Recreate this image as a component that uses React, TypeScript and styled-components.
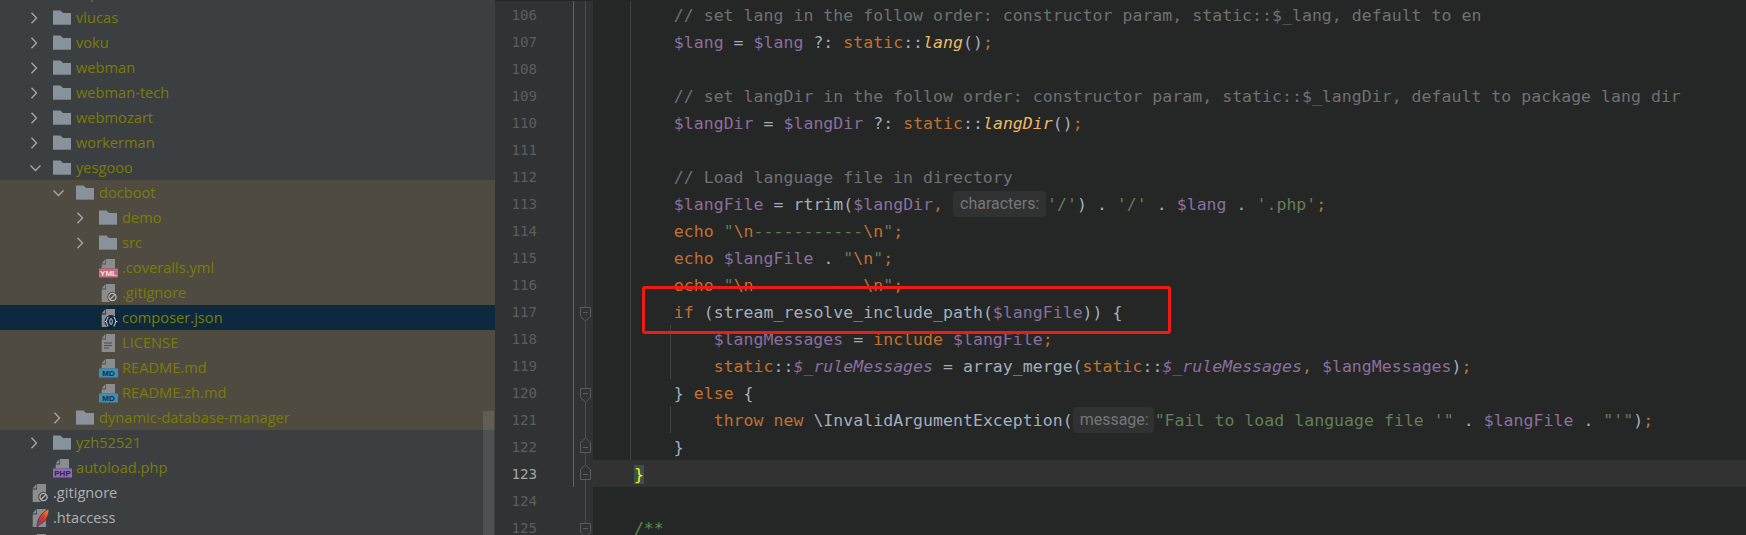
import * as React from 'react'
import styled, { createGlobalStyle } from 'styled-components'

const GlobalStyle = createGlobalStyle`
  html, body {
    margin: 0;
    padding: 0;
    background: #252626;
  }
`

const Window = styled.div`
  display: flex;
  width: 1746px;
  height: 535px;
  overflow: hidden;
`

/* project tree */

const Sidebar = styled.div`
  position: relative;
  flex: 0 0 495px;
  height: 535px;
  overflow: hidden;
  background: #3c3f41;
`

const TreeList = styled.div`
  margin-top: -20px;
`

const TreeRow = styled.div<{ $depth: number; $tone: 'plain' | 'ignored' | 'selected' }>`
  display: flex;
  align-items: center;
  height: 25px;
  padding-left: ${({ $depth }) => 7 + $depth * 23}px;
  background: ${({ $tone }) =>
    $tone === 'selected' ? '#0d293e' : $tone === 'ignored' ? '#4f4b41' : 'transparent'};
`

const ChevronSlot = styled.span`
  display: flex;
  align-items: center;
  flex: 0 0 23px;
`

const IconSlot = styled.span`
  display: flex;
  align-items: center;
  flex: 0 0 23px;
`

const TreeLabel = styled.span<{ $plain?: boolean }>`
  padding-bottom: 2px;
  font-family: 'Open Sans', 'Liberation Sans', sans-serif;
  font-size: 14.65px;
  white-space: nowrap;
  color: ${({ $plain }) => ($plain ? '#aeb1b3' : '#7b7c08')};
`

const ScrollThumb = styled.div`
  position: absolute;
  left: 483px;
  top: 411px;
  width: 11px;
  height: 124px;
  background: rgba(255, 255, 255, 0.1);
`

const Chevron: React.FC<{ open?: boolean }> = ({ open }) => (
  <svg width="12" height="12" viewBox="0 0 12 12" fill="none" stroke="#a3a6a8" strokeWidth="1.4">
    <polyline points={open ? '0.5,3.5 5.5,8.5 10.5,3.5' : '1.5,0.8 6.5,6 1.5,11.2'} />
  </svg>
)

const FolderIcon = () => (
  <svg width="18" height="15" viewBox="0 0 18 15">
    <path d="M0 0.5h7.5l2.5 2.5h8v12h-18z" fill="#87929a" />
    <rect x="0" y="14" width="18" height="1" fill="#6f7a82" />
  </svg>
)

const PAGE = 'M7 1h9v18h-13.3v-12.5h4.3z'
const FOLD = 'M2.7 5.5l3.6-4.5v4.5z'

type FileKind = 'yml' | 'ignore' | 'json' | 'text' | 'md' | 'php' | 'feather' | 'plain'

const BADGES: Record<string, { label: string; fill: string; ink: string }> = {
  yml: { label: 'YML', fill: '#c56c7c', ink: '#f2dfe2' },
  md: { label: 'MD', fill: '#3d8fb3', ink: '#12303f' },
  php: { label: 'PHP', fill: '#8a6cb8', ink: '#2f2742' },
}

const BadgeText = styled.text`
  font-family: 'Liberation Sans', sans-serif;
  font-size: 8px;
  font-weight: 700;
`

const FileIcon: React.FC<{ kind: FileKind; backdrop: string }> = ({ kind, backdrop }) => {
  const badge = BADGES[kind]
  const page = badge ? 'M7 1h9v9.5h-13.3v-4h4.3z' : PAGE
  return (
    <svg width="20" height="20" viewBox="0 0 20 20">
      <path d={page} fill="#8a8c8e" />
      <path d={FOLD} fill="#8a8c8e" />
      {badge && (
        <>
          <rect x="0" y="10.5" width="19" height="9" fill={badge.fill} />
          <BadgeText x="9.5" y="18" textAnchor="middle" fill={badge.ink}>
            {badge.label}
          </BadgeText>
        </>
      )}
      {kind === 'text' && (
        <path d="M5 10h8M5 12.5h8M5 15h5" stroke="#4a4b47" strokeWidth="1" />
      )}
      {kind === 'ignore' && (
        <>
          <circle cx="13.5" cy="14" r="5.2" fill={backdrop} />
          <circle cx="13.5" cy="14" r="3.6" fill="none" stroke="#b5b6b4" strokeWidth="1.3" />
          <path d="M11 16.5l5-5" stroke="#b5b6b4" strokeWidth="1.2" />
        </>
      )}
      {kind === 'json' && (
        <>
          <circle cx="12" cy="13.5" r="6.5" fill={backdrop} />
          <path
            d="M9.5 9c-2 0-1 4-2.7 4.5 1.7.5.7 4.5 2.7 4.5M14.5 9c2 0 1 4 2.7 4.5-1.7.5-.7 4.5-2.7 4.5"
            fill="none"
            stroke="#c6cdd2"
            strokeWidth="1.1"
          />
          <ellipse cx="12" cy="13.5" rx="1.3" ry="3" fill="none" stroke="#c6cdd2" strokeWidth="1" />
        </>
      )}
      {kind === 'feather' && (
        <>
          <defs>
            <linearGradient id="feather" x1="1" y1="0" x2="0" y2="1">
              <stop offset="0" stopColor="#f0982c" />
              <stop offset="0.5" stopColor="#d8322f" />
              <stop offset="1" stopColor="#7b3a98" />
            </linearGradient>
          </defs>
          <path
            d="M7 18.5c0-7 4.5-14.5 12-17.5 0 6.5-3.5 13.500-9.500 15.500l-1.500 2z"
            fill="url(#feather)"
            stroke={backdrop}
            strokeWidth="0.8"
          />
        </>
      )}
    </svg>
  )
}

interface TreeItem {
  name: string
  depth: number
  folder?: 'open' | 'closed'
  file?: FileKind
  tone?: 'plain' | 'ignored' | 'selected'
  plain?: boolean
}

const TREE: TreeItem[] = [
  { name: 'topthink', depth: 1, folder: 'closed' },
  { name: 'vlucas', depth: 1, folder: 'closed' },
  { name: 'voku', depth: 1, folder: 'closed' },
  { name: 'webman', depth: 1, folder: 'closed' },
  { name: 'webman-tech', depth: 1, folder: 'closed' },
  { name: 'webmozart', depth: 1, folder: 'closed' },
  { name: 'workerman', depth: 1, folder: 'closed' },
  { name: 'yesgooo', depth: 1, folder: 'open' },
  { name: 'docboot', depth: 2, folder: 'open', tone: 'ignored' },
  { name: 'demo', depth: 3, folder: 'closed', tone: 'ignored' },
  { name: 'src', depth: 3, folder: 'closed', tone: 'ignored' },
  { name: '.coveralls.yml', depth: 3, file: 'yml', tone: 'ignored' },
  { name: '.gitignore', depth: 3, file: 'ignore', tone: 'ignored' },
  { name: 'composer.json', depth: 3, file: 'json', tone: 'selected' },
  { name: 'LICENSE', depth: 3, file: 'text', tone: 'ignored' },
  { name: 'README.md', depth: 3, file: 'md', tone: 'ignored' },
  { name: 'README.zh.md', depth: 3, file: 'md', tone: 'ignored' },
  { name: 'dynamic-database-manager', depth: 2, folder: 'closed', tone: 'ignored' },
  { name: 'yzh52521', depth: 1, folder: 'closed' },
  { name: 'autoload.php', depth: 1, file: 'php' },
  { name: '.gitignore', depth: 0, file: 'ignore', plain: true },
  { name: '.htaccess', depth: 0, file: 'feather', plain: true },
  { name: 'composer.json', depth: 0, file: 'plain', plain: true },
]

const BACKDROPS = { plain: '#3c3f41', ignored: '#4f4b41', selected: '#0d293e' }

/* code editor */

const Editor = styled.div`
  position: relative;
  flex: 1;
  min-width: 0;
  padding-top: 1px;
  background: #252626;
`

const Line = styled.div`
  display: flex;
  height: 27px;
`

const LineNumber = styled.div<{ $current?: boolean; $changed?: boolean }>`
  flex: 0 0 79px;
  box-sizing: border-box;
  padding-right: 36px;
  text-align: right;
  background: #303234;
  border-right: 1px solid ${({ $changed }) => ($changed ? '#4f6f69' : '#303234')};
  font-family: 'DejaVu Sans Mono', monospace;
  font-size: 14.2px;
  line-height: 29px;
  color: ${({ $current }) => ($current ? '#a4a5a5' : '#5b5e60')};
`

const FoldCell = styled.div`
  position: relative;
  flex: 0 0 19px;
  background: #303234;

  &::before {
    content: '';
    position: absolute;
    left: 11px;
    top: 0;
    bottom: 0;
    width: 1px;
    background: #4a4c4e;
  }
`

const FoldSvg = styled.svg<{ $dir: 'open' | 'close' }>`
  position: absolute;
  left: 6px;
  top: ${({ $dir }) => ($dir === 'open' ? 8 : 4)}px;
`

const CodeCell = styled.div<{ $current?: boolean; $outer?: boolean; $inner?: boolean }>`
  position: relative;
  flex: 1;
  padding-left: 1px;
  background: ${({ $current }) => ($current ? '#323232' : 'transparent')};
  font-family: 'DejaVu Sans Mono', monospace;
  font-size: 16.5px;
  letter-spacing: 0.037px;
  line-height: 29px;
  white-space: pre;

  &::before {
    content: '';
    display: ${({ $outer }) => ($outer ? 'block' : 'none')};
    position: absolute;
    left: 37px;
    top: 0;
    bottom: 0;
    width: 1px;
    background: #3f4141;
  }

  &::after {
    content: '';
    display: ${({ $inner }) => ($inner ? 'block' : 'none')};
    position: absolute;
    left: 77px;
    top: 0;
    bottom: 0;
    width: 1px;
    background: #3f4141;
  }
`

type TokenKind = 'text' | 'comment' | 'variable' | 'keyword' | 'call' | 'string' | 'doc'

const TOKEN_COLORS: Record<TokenKind, string> = {
  text: '#a3afbc',
  comment: '#6f7172',
  variable: '#8b6f9f',
  keyword: '#c0722f',
  call: '#eebb68',
  string: '#647f54',
  doc: '#5c8c50',
}

const Token = styled.span<{ $kind: TokenKind; $italic?: boolean }>`
  color: ${({ $kind }) => TOKEN_COLORS[$kind]};
  font-style: ${({ $italic }) => ($italic ? 'italic' : 'normal')};
`

const MatchedBrace = styled.span`
  color: #f7ee2a;
  background: #3b514d;
`

const InlayHint = styled.span<{ $width: number }>`
  display: inline-block;
  box-sizing: border-box;
  width: ${({ $width }) => $width}px;
  height: 26px;
  margin: 0 1px 0 0;
  padding-left: 7px;
  border-radius: 4px;
  background: #303131;
  font-family: 'Roboto', 'Liberation Sans', sans-serif;
  font-size: 16px;
  letter-spacing: 0;
  line-height: 25px;
  color: #74777a;
  vertical-align: 1px;
`

const Callout = styled.div`
  position: absolute;
  left: 147px;
  top: 286px;
  box-sizing: border-box;
  width: 529px;
  height: 48px;
  border: 3px solid #f01a14;
  border-radius: 3px;
`

const FoldMark: React.FC<{ dir: 'open' | 'close' }> = ({ dir }) => (
  <FoldSvg $dir={dir} width="11" height="16" viewBox="0 0 11 16" fill="#303234" stroke="#5a5c5e">
    <path
      d={dir === 'open' ? 'M.5 1.5h10v9l-5 4.500-5-4.500z' : 'M.5 15.500h10v-10l-5-4.500-5 4.500z'}
    />
    <path d={dir === 'open' ? 'M3 6.500h5' : 'M3 10.500h5'} />
  </FoldSvg>
)

const t = (s: string) => <Token $kind="text">{s}</Token>
const c = (s: string) => <Token $kind="comment">{s}</Token>
const v = (s: string, italic?: boolean) => (
  <Token $kind="variable" $italic={italic}>
    {s}
  </Token>
)
const k = (s: string) => <Token $kind="keyword">{s}</Token>
const f = (s: string) => (
  <Token $kind="call" $italic>
    {s}
  </Token>
)
const q = (s: string) => <Token $kind="string">{s}</Token>

interface CodeLine {
  no: number
  code?: React.ReactNode
  fold?: 'open' | 'close'
  inner?: boolean
}

const CODE: CodeLine[] = [
  {
    no: 106,
    code: c('        // set lang in the follow order: constructor param, static::$_lang, default to en'),
  },
  {
    no: 107,
    code: (
      <>
        {t('        ')}
        {v('$lang')}
        {t(' = ')}
        {v('$lang')}
        {t(' ?: ')}
        {k('static')}
        {t('::')}
        {f('lang')}
        {t('()')}
        {k(';')}
      </>
    ),
  },
  { no: 108 },
  {
    no: 109,
    code: c(
      '        // set langDir in the follow order: constructor param, static::$_langDir, default to package lang dir',
    ),
  },
  {
    no: 110,
    code: (
      <>
        {t('        ')}
        {v('$langDir')}
        {t(' = ')}
        {v('$langDir')}
        {t(' ?: ')}
        {k('static')}
        {t('::')}
        {f('langDir')}
        {t('()')}
        {k(';')}
      </>
    ),
  },
  { no: 111 },
  { no: 112, code: c('        // Load language file in directory') },
  {
    no: 113,
    code: (
      <>
        {t('        ')}
        {v('$langFile')}
        {t(' = rtrim(')}
        {v('$langDir')}
        {k(',')}
        {t(' ')}
        <InlayHint $width={93}>characters:</InlayHint>
        {q("'/'")}
        {t(') . ')}
        {q("'/'")}
        {t(' . ')}
        {v('$lang')}
        {t(' . ')}
        {q("'.php'")}
        {k(';')}
      </>
    ),
  },
  {
    no: 114,
    code: (
      <>
        {t('        ')}
        {k('echo')}
        {t(' ')}
        {q('"')}
        {k('\\n')}
        {q('-----------')}
        {k('\\n')}
        {q('"')}
        {k(';')}
      </>
    ),
  },
  {
    no: 115,
    code: (
      <>
        {t('        ')}
        {k('echo')}
        {t(' ')}
        {v('$langFile')}
        {t(' . ')}
        {q('"')}
        {k('\\n')}
        {q('"')}
        {k(';')}
      </>
    ),
  },
  {
    no: 116,
    code: (
      <>
        {t('        ')}
        {k('echo')}
        {t(' ')}
        {q('"')}
        {k('\\n')}
        {q('-----------')}
        {k('\\n')}
        {q('"')}
        {k(';')}
      </>
    ),
  },
  {
    no: 117,
    fold: 'open',
    code: (
      <>
        {t('        ')}
        {k('if')}
        {t(' (stream_resolve_include_path(')}
        {v('$langFile')}
        {t(')) {')}
      </>
    ),
  },
  {
    no: 118,
    inner: true,
    code: (
      <>
        {t('            ')}
        {v('$langMessages')}
        {t(' = ')}
        {k('include')}
        {t(' ')}
        {v('$langFile')}
        {k(';')}
      </>
    ),
  },
  {
    no: 119,
    inner: true,
    code: (
      <>
        {t('            ')}
        {k('static')}
        {t('::')}
        {v('$_ruleMessages', true)}
        {t(' = array_merge(')}
        {k('static')}
        {t('::')}
        {v('$_ruleMessages', true)}
        {k(',')}
        {t(' ')}
        {v('$langMessages')}
        {t(')')}
        {k(';')}
      </>
    ),
  },
  {
    no: 120,
    fold: 'open',
    code: (
      <>
        {t('        } ')}
        {k('else')}
        {t(' {')}
      </>
    ),
  },
  {
    no: 121,
    inner: true,
    code: (
      <>
        {t('            ')}
        {k('throw new')}
        {t(' \\InvalidArgumentException(')}
        <InlayHint $width={81}>message:</InlayHint>
        {q('"Fail to load language file \'"')}
        {t(' . ')}
        {v('$langFile')}
        {t(' . ')}
        {q('"\'"')}
        {t(')')}
        {k(';')}
      </>
    ),
  },
  { no: 122, fold: 'close', code: t('        }') },
  {
    no: 123,
    fold: 'close',
    code: (
      <>
        {t('    ')}
        <MatchedBrace>{'}'}</MatchedBrace>
      </>
    ),
  },
  { no: 124 },
  {
    no: 125,
    fold: 'open',
    code: (
      <>
        {t('    ')}
        <Token $kind="doc">{'/**'}</Token>
      </>
    ),
  },
]

export default function App() {
  return (
    <>
      <GlobalStyle />
      <Window>
        <Sidebar>
          <TreeList>
            {TREE.map((item, i) => (
              <TreeRow key={i} $depth={item.depth} $tone={item.tone ?? 'plain'}>
                <ChevronSlot>{item.folder && <Chevron open={item.folder === 'open'} />}</ChevronSlot>
                <IconSlot>
                  {item.folder ? (
                    <FolderIcon />
                  ) : (
                    <FileIcon kind={item.file ?? 'plain'} backdrop={BACKDROPS[item.tone ?? 'plain']} />
                  )}
                </IconSlot>
                <TreeLabel $plain={item.plain}>{item.name}</TreeLabel>
              </TreeRow>
            ))}
          </TreeList>
          <ScrollThumb />
        </Sidebar>
        <Editor>
          {CODE.map(line => (
            <Line key={line.no}>
              <LineNumber $current={line.no === 123} $changed={line.no <= 123}>
                {line.no}
              </LineNumber>
              <FoldCell>{line.fold && <FoldMark dir={line.fold} />}</FoldCell>
              <CodeCell $current={line.no === 123} $outer={line.no <= 122} $inner={line.inner}>
                {line.code}
              </CodeCell>
            </Line>
          ))}
          <Callout />
        </Editor>
      </Window>
    </>
  )
}
